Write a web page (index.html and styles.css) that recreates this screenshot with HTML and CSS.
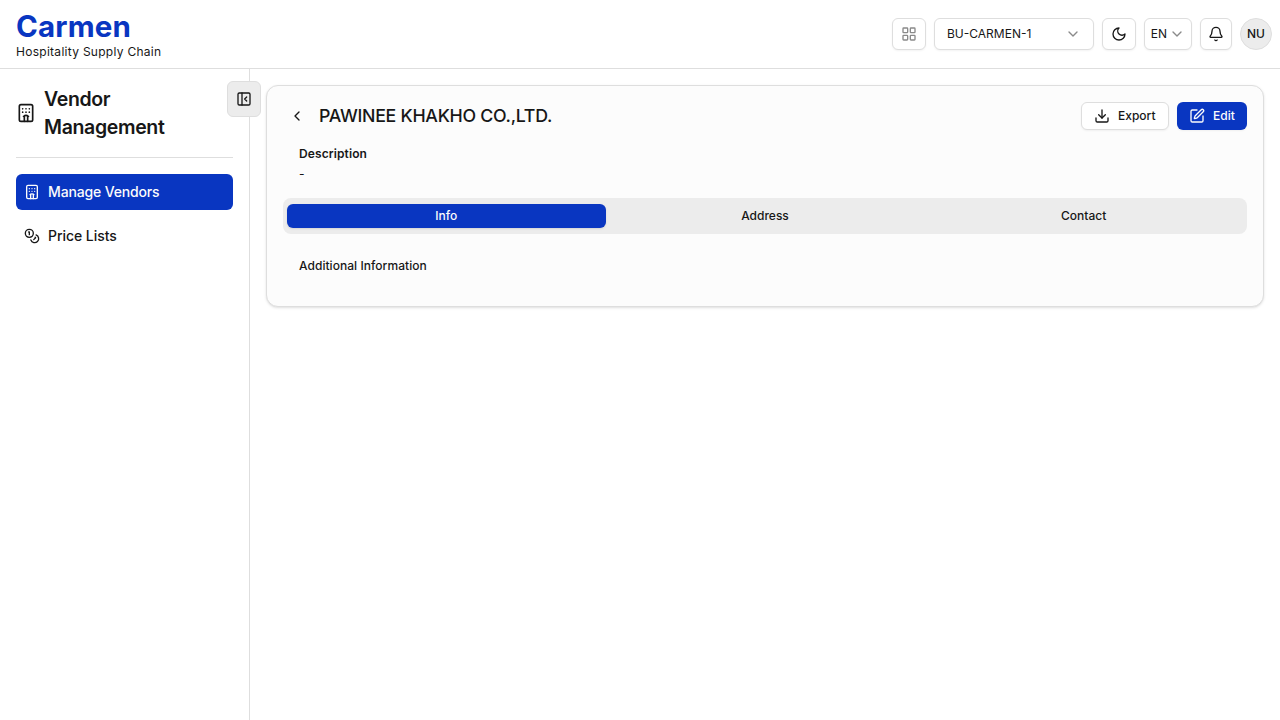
FILE: index.html
```html
<!DOCTYPE html>
<html lang="en">
<head>
<meta charset="utf-8">
<title>Carmen</title>
<link rel="stylesheet" href="styles.css">
</head>
<body>
<header class="topbar">
  <div class="brand">
    <div class="brand-name">Carmen</div>
    <div class="brand-sub">Hospitality Supply Chain</div>
  </div>
  <div class="tools">
    <button class="tool tool-wide muted" aria-label="Modules"><svg class="icon" viewBox="0 0 24 24"><rect width="7" height="7" x="3" y="3" rx="1"/><rect width="7" height="7" x="14" y="3" rx="1"/><rect width="7" height="7" x="14" y="14" rx="1"/><rect width="7" height="7" x="3" y="14" rx="1"/></svg></button>
    <button class="tool unit"><span class="caption">BU-CARMEN-1</span><svg class="icon chevron" viewBox="0 0 24 24"><path d="m6 9 6 6 6-6"/></svg></button>
    <button class="tool tool-wide" aria-label="Theme"><svg class="icon" viewBox="0 0 24 24"><path d="M12 3a6 6 0 0 0 9 9 9 9 0 1 1-9-9Z"/></svg></button>
    <button class="tool lang"><span class="caption">EN</span><svg class="icon chevron" viewBox="0 0 24 24"><path d="m6 9 6 6 6-6"/></svg></button>
    <button class="tool bell" aria-label="Notifications"><svg class="icon" viewBox="0 0 24 24"><path d="M10.268 21a2 2 0 0 0 3.464 0"/><path d="M3.262 15.326A1 1 0 0 0 4 17h16a1 1 0 0 0 .74-1.673C19.41 13.956 18 12.499 18 8A6 6 0 0 0 6 8c0 4.499-1.411 5.956-2.738 7.326"/></svg></button>
    <div class="avatar"><span class="caption">NU</span></div>
  </div>
</header>
<div class="shell">
  <aside class="sidebar">
    <button class="collapse" aria-label="Collapse sidebar"><svg class="icon" viewBox="0 0 24 24"><rect width="18" height="18" x="3" y="3" rx="2"/><path d="M9 3v18"/><path d="m16 15-3-3 3-3"/></svg></button>
    <div class="module">
      <svg class="icon module-icon" viewBox="0 0 24 24"><path d="M10 22v-6.57M12 11h.01M12 7h.01M14 15.43V22M15 16a5 5 0 0 0-6 0M16 11h.01M16 7h.01M8 11h.01M8 7h.01"/><rect width="16" height="20" x="4" y="2" rx="2"/></svg>
      <h2 class="module-title">Vendor Management</h2>
    </div>
    <nav class="nav">
      <a class="nav-item active"><svg class="icon" viewBox="0 0 24 24"><path d="M10 22v-6.57M12 11h.01M12 7h.01M14 15.43V22M15 16a5 5 0 0 0-6 0M16 11h.01M16 7h.01M8 11h.01M8 7h.01"/><rect width="16" height="20" x="4" y="2" rx="2"/></svg><span class="caption">Manage Vendors</span></a>
      <a class="nav-item"><svg class="icon" viewBox="0 0 24 24"><circle cx="8" cy="8" r="6"/><path d="M18.09 10.37A6 6 0 1 1 10.34 18"/><path d="M7 6h1v4"/><path d="m16.71 13.88.7.71-2.82 2.82"/></svg><span class="caption">Price Lists</span></a>
    </nav>
  </aside>
  <main class="main">
    <section class="card">
      <div class="card-head">
        <button class="back" aria-label="Back"><svg class="icon" viewBox="0 0 24 24"><path d="m15 18-6-6 6-6"/></svg></button>
        <h1 class="title">PAWINEE KHAKHO CO.,LTD.</h1>
        <div class="actions">
          <button class="btn export"><svg class="icon" viewBox="0 0 24 24"><path d="M21 15v4a2 2 0 0 1-2 2H5a2 2 0 0 1-2-2v-4"/><path d="m7 10 5 5 5-5"/><path d="M12 15V3"/></svg><span class="caption">Export</span></button>
          <button class="btn primary"><svg class="icon" viewBox="0 0 24 24"><path d="M12 3H5a2 2 0 0 0-2 2v14a2 2 0 0 0 2 2h14a2 2 0 0 0 2-2v-7"/><path d="M18.375 2.625a1 1 0 0 1 3 3l-9.013 9.014a2 2 0 0 1-.853.505l-2.873.84a.5.5 0 0 1-.62-.62l.84-2.873a2 2 0 0 1 .506-.852z"/></svg><span class="caption">Edit</span></button>
        </div>
      </div>
      <div class="description">
        <div class="label">Description</div>
        <div class="value">-</div>
      </div>
      <div class="tabs">
        <button class="tab selected">Info</button>
        <button class="tab">Address</button>
        <button class="tab">Contact</button>
      </div>
      <div class="panel">Additional Information</div>
    </section>
  </main>
</div>
</body>
</html>
```
FILE: styles.css
```css
* { box-sizing: border-box; margin: 0; }
body {
  height: 100vh;
  display: flex;
  flex-direction: column;
  font-family: Inter, sans-serif;
  color: #171717;
  background: #fff;
  overflow: hidden;
}
button { font: inherit; color: inherit; padding: 0; border: 0; background: none; letter-spacing: inherit; }
.icon {
  width: 16px;
  height: 16px;
  flex: none;
  fill: none;
  stroke: currentColor;
  stroke-width: 2;
  stroke-linecap: round;
  stroke-linejoin: round;
}
.caption { padding-bottom: 2px; }
.topbar {
  height: 69px;
  flex: none;
  display: flex;
  align-items: center;
  justify-content: space-between;
  padding: 0 8px 0 16px;
  border-bottom: 1px solid #dedede;
}
.brand-name { padding-top: 1px; font-size: 29.5px; line-height: 35px; font-weight: 700; letter-spacing: 0.15px; color: #0936c1; }
.brand-sub { font-size: 12px; line-height: 16px; letter-spacing: 0.28px; }
.tools { display: flex; align-items: center; gap: 8px; }
.tool {
  height: 32px;
  display: flex;
  align-items: center;
  justify-content: center;
  border: 1px solid #dedede;
  border-radius: 6px;
  font-size: 12px;
  background: #fff;
  box-shadow: 0 1px 2px rgb(0 0 0 / 5%);
}
.tool-wide { width: 34px; }
.muted .icon { opacity: 0.5; }
.unit { width: 160px; justify-content: space-between; padding: 0 12px; }
.lang { width: 48px; gap: 2px; }
.bell { width: 32px; }
.chevron { opacity: 0.5; }
.avatar {
  width: 32px;
  height: 32px;
  display: grid;
  place-items: center;
  border: 1px solid #dedede;
  border-radius: 50%;
  background: #ececec;
  font-size: 12px;
  font-weight: 500;
}
.shell { flex: 1; display: flex; min-height: 0; }
.sidebar { position: relative; width: 250px; flex: none; padding: 16px; border-right: 1px solid #dedede; }
.collapse {
  position: absolute;
  top: 12px;
  right: -12px;
  width: 34px;
  height: 36px;
  display: grid;
  place-items: center;
  border: 1px solid #dedede;
  border-radius: 6px;
  background: #ececec;
}
.module { display: flex; align-items: center; gap: 8px; padding-bottom: 16px; border-bottom: 1px solid #dedede; }
.module-icon { width: 20px; height: 20px; }
.module-title { width: 140px; font-size: 19.5px; line-height: 28px; font-weight: 600; letter-spacing: -0.35px; }
.nav { display: flex; flex-direction: column; gap: 8px; margin-top: 16px; }
.nav-item { height: 36px; display: flex; align-items: center; gap: 8px; padding: 0 8px; border-radius: 6px; font-size: 14px; font-weight: 500; letter-spacing: -0.15px; }
.nav-item:not(.active) { letter-spacing: -0.05px; }
.nav-item.active { background: #0936c1; color: #fcfcfc; }
.main { flex: 1; padding: 16px; }
.card {
  height: 222px;
  padding: 16px;
  border: 1px solid #dedede;
  border-radius: 12px;
  background: #fcfcfc;
  box-shadow: 0 1px 3px rgb(0 0 0 / 10%), 0 1px 2px -1px rgb(0 0 0 / 10%);
}
.card-head { display: flex; align-items: center; height: 28px; }
.back { width: 28px; height: 28px; display: grid; place-items: center; }
.title { margin-left: 8px; font-size: 17.75px; line-height: 28px; font-weight: 500; letter-spacing: -0.28px; }
.actions { display: flex; gap: 8px; margin-left: auto; }
.btn {
  height: 28px;
  display: flex;
  align-items: center;
  gap: 8px;
  padding: 0 12px;
  border: 1px solid #dedede;
  border-radius: 6px;
  background: #fff;
  font-size: 12px;
  font-weight: 500;
  box-shadow: 0 1px 2px rgb(0 0 0 / 5%);
}
.btn.export { width: 88px; }
.btn.primary { width: 70px; border: 0; background: #0936c1; color: #fcfcfc; letter-spacing: 0.05px; }
.description { padding: 16px 16px 0; font-size: 12px; line-height: 16px; }
.label { font-weight: 600; letter-spacing: 0.1px; }
.value { margin-top: 4px; }
.tabs { height: 36px; display: grid; grid-template-columns: repeat(3, 1fr); align-items: center; margin-top: 16px; padding: 4px; border-radius: 8px; background: #ececec; }
.tab { height: 24px; border-radius: 6px; font-size: 12px; line-height: 16px; font-weight: 500; }
.tab.selected { background: #0936c1; color: #fcfcfc; box-shadow: 0 1px 2px rgb(0 0 0 / 10%); }
.panel { padding: 24px 16px 0; font-size: 12px; line-height: 16px; font-weight: 500; letter-spacing: 0.05px; }
```
